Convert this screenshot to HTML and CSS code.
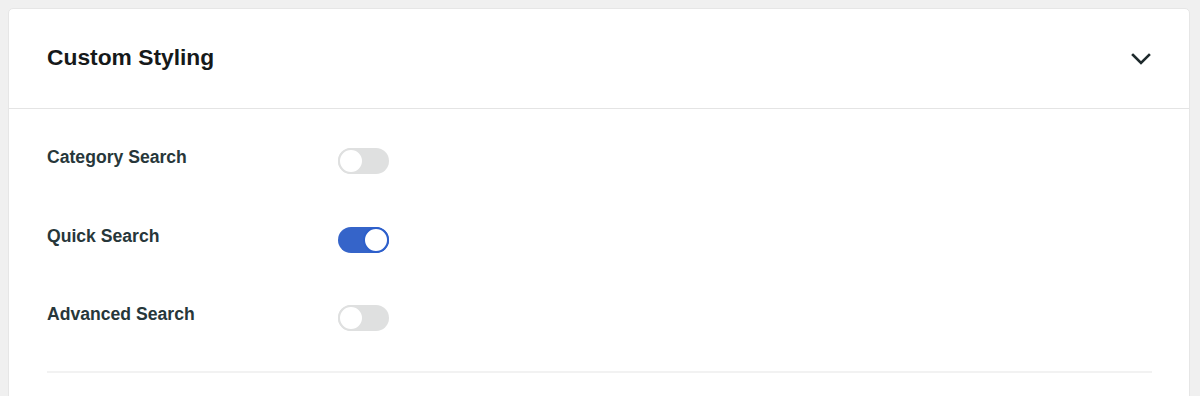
FILE: index.html
```html
<!DOCTYPE html>
<html>
<head>
<meta charset="utf-8">
<link rel="stylesheet" href="styles.css">
</head>
<body>
<div class="card">
  <div class="card-header">
    <h2 class="title">Custom Styling</h2>
    <svg class="chevron" width="20" height="12" viewBox="0 0 20 12"><polyline points="2,2 10,10 18,2" fill="none" stroke="#1e2a2c" stroke-width="2.6" stroke-linecap="square"/></svg>
  </div>
  <div class="card-body">
    <div class="row">
      <span class="label">Category Search</span>
      <span class="toggle"><span class="knob"></span></span>
    </div>
    <div class="row">
      <span class="label">Quick Search</span>
      <span class="toggle on"><span class="knob"></span></span>
    </div>
    <div class="row last">
      <span class="label">Advanced Search</span>
      <span class="toggle"><span class="knob"></span></span>
    </div>
    <div class="divider"></div>
  </div>
</div>
</body>
</html>
```
FILE: styles.css
```css
html, body { margin: 0; padding: 0; }
body {
  background: #f0f0f0;
  font-family: "Liberation Sans", Arial, sans-serif;
  padding: 8px 0 0 8px;
  height: 396px;
  box-sizing: border-box;
  overflow: hidden;
}
.card {
  width: 1182px;
  background: #fff;
  border: 1px solid #e6e6e6;
  border-radius: 5px;
  box-sizing: border-box;
  height: 400px;
}
.card-header {
  height: 99px;
  display: flex;
  align-items: center;
  justify-content: space-between;
  padding: 0 38px 0 38px;
  border-bottom: 1px solid #e4e4e4;
}
.title {
  margin: 0;
  font-size: 22.8px;
  font-weight: bold;
  color: #16191a;
  margin-top: -2px;
}
.chevron { display: block; margin-top: 1px; }
.card-body {
  padding: 39px 37px 0 38px;
}
.row {
  display: flex;
  align-items: flex-start;
  height: 26px;
  margin-bottom: 52.5px;
}
.row.last { margin-bottom: 40px; }
.label {
  width: 291px;
  font-size: 17.6px;
  font-weight: bold;
  line-height: 19px;
  color: #27373a;
}
.toggle {
  width: 51px;
  height: 26px;
  border-radius: 13px;
  background: #dfe0e0;
  display: flex;
  align-items: center;
  justify-content: flex-start;
  box-sizing: border-box;
}
.knob {
  width: 26px;
  height: 26px;
  border-radius: 50%;
  background: #fff;
  border: 2px solid #dfe0e0;
  box-sizing: border-box;
}
.toggle.on {
  background: #3564c9;
  justify-content: flex-end;
}
.toggle.on .knob { border-color: #2d5fcb; }
.divider {
  height: 2px;
  background: #f2f2f2;
}
```
